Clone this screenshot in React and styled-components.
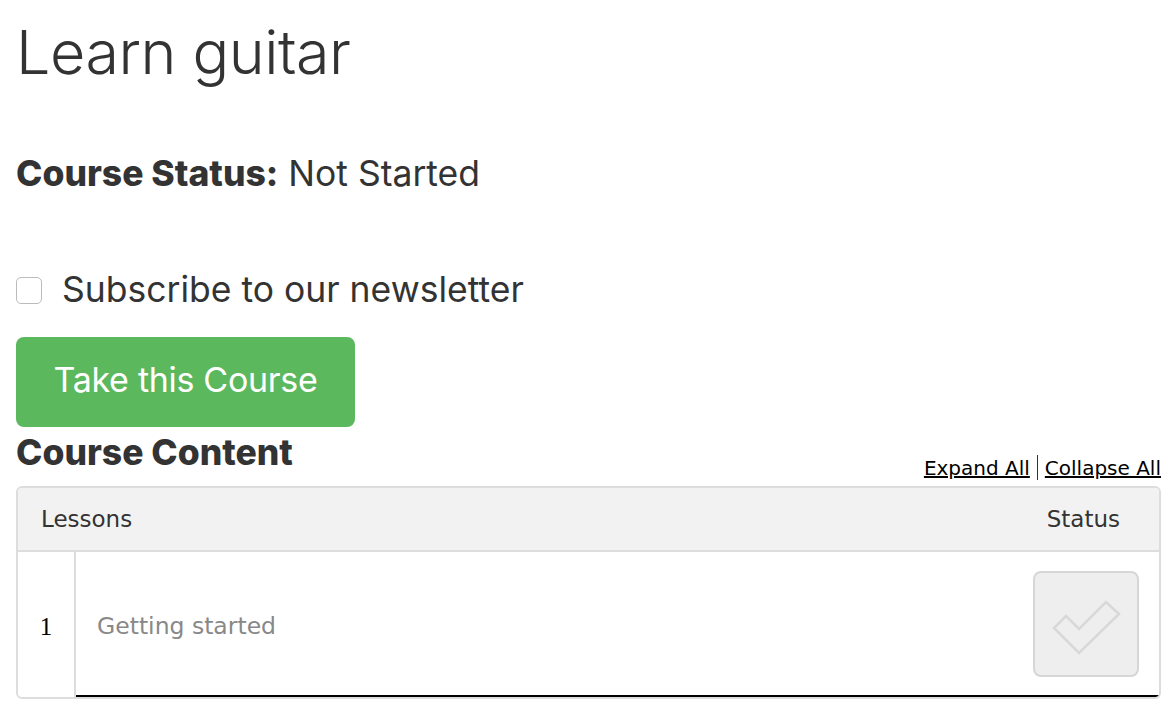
import styled, { createGlobalStyle } from 'styled-components';

const GlobalStyle = createGlobalStyle`
  body {
    margin: 0;
    background: #fff;
    font-family: 'Inter', 'Noto Sans', sans-serif;
    color: #333;
  }
`;

const Page = styled.div`
  padding: 0 15px 0 16px;
`;

const Title = styled.h1`
  margin: 0;
  padding-top: 14px;
  font-size: 61px;
  font-weight: 300;
  line-height: 76px;
  color: #333;
  letter-spacing: -0.5px;
`;

const StatusLine = styled.p`
  margin: 62px 0 0;
  font-size: 35.5px;
  line-height: 44px;
  color: #333;
  b {
    font-weight: 800;
  }
`;

const Subscribe = styled.label`
  display: flex;
  align-items: center;
  gap: 20px;
  margin-top: 72px;
  font-size: 35.5px;
  line-height: 44px;
  color: #333;
`;

const Box = styled.span`
  width: 26px;
  height: 27px;
  border: 1px solid #bbb;
  border-radius: 5px;
  background: #fff;
  box-sizing: border-box;
  flex: none;
`;

const TakeButton = styled.button`
  display: block;
  margin-top: 25px;
  width: 339px;
  height: 90px;
  border: none;
  border-radius: 8px;
  background: #5cb85c;
  color: #fff;
  font-family: inherit;
  font-size: 34px;
  letter-spacing: -0.3px;
  padding: 0 0 6px;
  cursor: pointer;
`;

const ContentHead = styled.div`
  display: flex;
  justify-content: space-between;
  align-items: flex-end;
`;

const ContentTitle = styled.h2`
  margin: 4px 0 0;
  font-size: 35.5px;
  font-weight: 800;
  line-height: 44px;
  color: #333;
`;

const Toggles = styled.div`
  display: flex;
  align-items: center;
  font-family: 'DejaVu Sans', Verdana, sans-serif;
  font-size: 20px;
  margin-bottom: -5px;
  a {
    color: #000;
    text-decoration: underline;
  }
`;

const Sep = styled.span`
  display: inline-block;
  width: 1px;
  height: 25px;
  background: #333;
  margin: 0 7px;
`;

const Table = styled.div`
  margin-top: 11px;
  border: 2px solid #ddd;
  border-radius: 6px;
  overflow: hidden;
  font-family: 'DejaVu Sans', Verdana, sans-serif;
`;

const HeadRow = styled.div`
  display: flex;
  justify-content: space-between;
  align-items: center;
  height: 62px;
  padding: 0 39px 0 23px;
  background: #f2f2f2;
  border-bottom: 2px solid #ddd;
  font-size: 23px;
  color: #333;
`;

const Row = styled.div`
  display: flex;
  height: 145px;
`;

const Num = styled.div`
  width: 56px;
  flex: none;
  display: flex;
  align-items: center;
  justify-content: center;
  padding-top: 4px;
  border-right: 2px solid #ddd;
  font-family: 'Liberation Serif', serif;
  font-size: 25px;
  color: #000;
`;

const Lesson = styled.div`
  flex: 1;
  display: flex;
  align-items: center;
  justify-content: space-between;
  padding: 0 20px 0 21px;
  border-bottom: 2px solid #000;
  font-size: 23.5px;
  color: #888;
`;

const LessonName = styled.span`
  padding-top: 4px;
`;

const StatusBox = styled.div`
  width: 106px;
  height: 106px;
  box-sizing: border-box;
  border: 2px solid #d6d6d6;
  border-radius: 8px;
  background: #eee;
  display: flex;
`;

function CheckOutline() {
  return (
    <svg width="102" height="102" viewBox="0 0 102 102">
      <polygon
        points="31,43 44,56 71,29 84,41 44,80 19,55"
        fill="none"
        stroke="#d8d8d8"
        strokeWidth="2.5"
        strokeLinejoin="miter"
      />
    </svg>
  );
}

export default function App() {
  return (
    <Page>
      <GlobalStyle />
      <Title>Learn guitar</Title>
      <StatusLine>
        <b>Course Status:</b> Not Started
      </StatusLine>
      <Subscribe>
        <Box />
        Subscribe to our newsletter
      </Subscribe>
      <TakeButton>Take this Course</TakeButton>
      <ContentHead>
        <ContentTitle>Course Content</ContentTitle>
        <Toggles>
          <a href="#expand">Expand All</a>
          <Sep />
          <a href="#collapse">Collapse All</a>
        </Toggles>
      </ContentHead>
      <Table>
        <HeadRow>
          <span>Lessons</span>
          <span>Status</span>
        </HeadRow>
        <Row>
          <Num>1</Num>
          <Lesson>
            <LessonName>Getting started</LessonName>
            <StatusBox>
              <CheckOutline />
            </StatusBox>
          </Lesson>
        </Row>
      </Table>
    </Page>
  );
}
